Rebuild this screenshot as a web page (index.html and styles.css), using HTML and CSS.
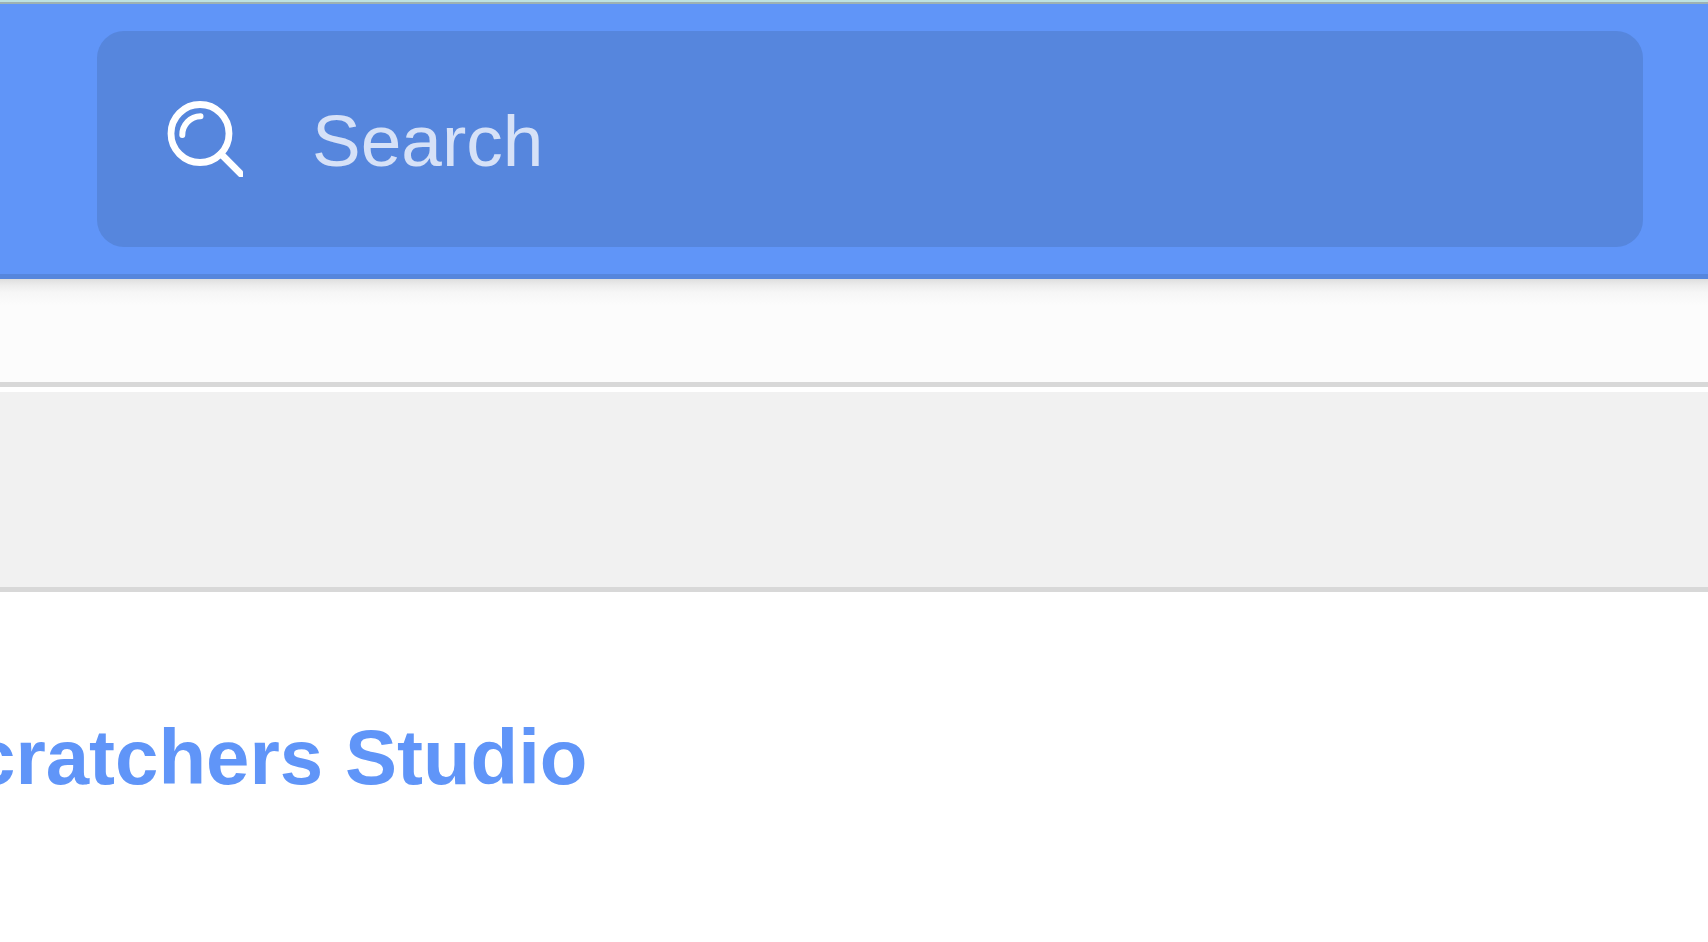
FILE: index.html
```html
<!DOCTYPE html>
<html lang="en">
<head>
<meta charset="utf-8">
<title>Studio</title>
<link rel="stylesheet" href="styles.css">
</head>
<body>
<header class="topbar">
  <form class="search" role="search">
    <button class="search-button" type="submit" aria-label="Submit search">
      <svg class="search-icon" viewBox="0 0 76 76" aria-hidden="true">
        <circle cx="33" cy="32.5" r="29" stroke-width="6.8"/>
        <path d="M15.3 34A18.5 18.5 0 0 1 33.5 15.3" stroke-width="6" stroke-linecap="round"/>
        <path d="M54 53L74 73" stroke-width="6.8" stroke-linecap="round"/>
      </svg>
    </button>
    <input class="search-input" type="text" placeholder="Search" aria-label="Search">
  </form>
</header>
<div class="subnav"></div>
<div class="band"></div>
<main class="content">
  <h1 class="title">cratchers Studio</h1>
</main>
</body>
</html>
```
FILE: styles.css
```css
* {
  box-sizing: border-box;
}

body {
  margin: 0;
  overflow: hidden;
  background: #fff;
  border-top: 2px solid #bde1e1;
  font-family: "Liberation Sans", Arial, sans-serif;
}

.topbar {
  padding: 27px 65px 27px 97px;
  background: #6095f8;
  border-top: 2px solid #9db2b2;
  border-bottom: 5px solid #5686dd;
}

.search {
  display: flex;
  align-items: center;
  gap: 69px;
  height: 216px;
  padding: 0 70px;
  background: #5686dd;
  border-radius: 27px;
}

.search-button {
  display: flex;
  padding: 0;
  border: 0;
  background: none;
}

.search-icon {
  width: 76px;
  height: 76px;
  fill: none;
  stroke: #fff;
}

.search-input {
  flex: 1;
  min-width: 0;
  padding: 4px 0 0;
  border: 0;
  outline: 0;
  background: none;
  color: #fff;
  font-family: inherit;
  font-size: 73px;
  line-height: 84px;
}

.search-input::placeholder {
  color: #d6e1f7;
  opacity: 1;
}

.subnav {
  height: 108px;
  background: linear-gradient(#dedede, #ececec 6px, #f6f6f6 13px, #fcfcfc 26px);
  border-bottom: 5px solid #d8d8d8;
}

.band {
  height: 205px;
  background: #f1f1f1;
  border-top: 5px solid #fff;
  border-bottom: 5px solid #d8d8d8;
}

.content {
  padding-top: 121px;
}

.title {
  margin: 0 0 0 -28px;
  color: #6095f8;
  font-size: 78px;
  line-height: 88px;
  white-space: nowrap;
}
```
